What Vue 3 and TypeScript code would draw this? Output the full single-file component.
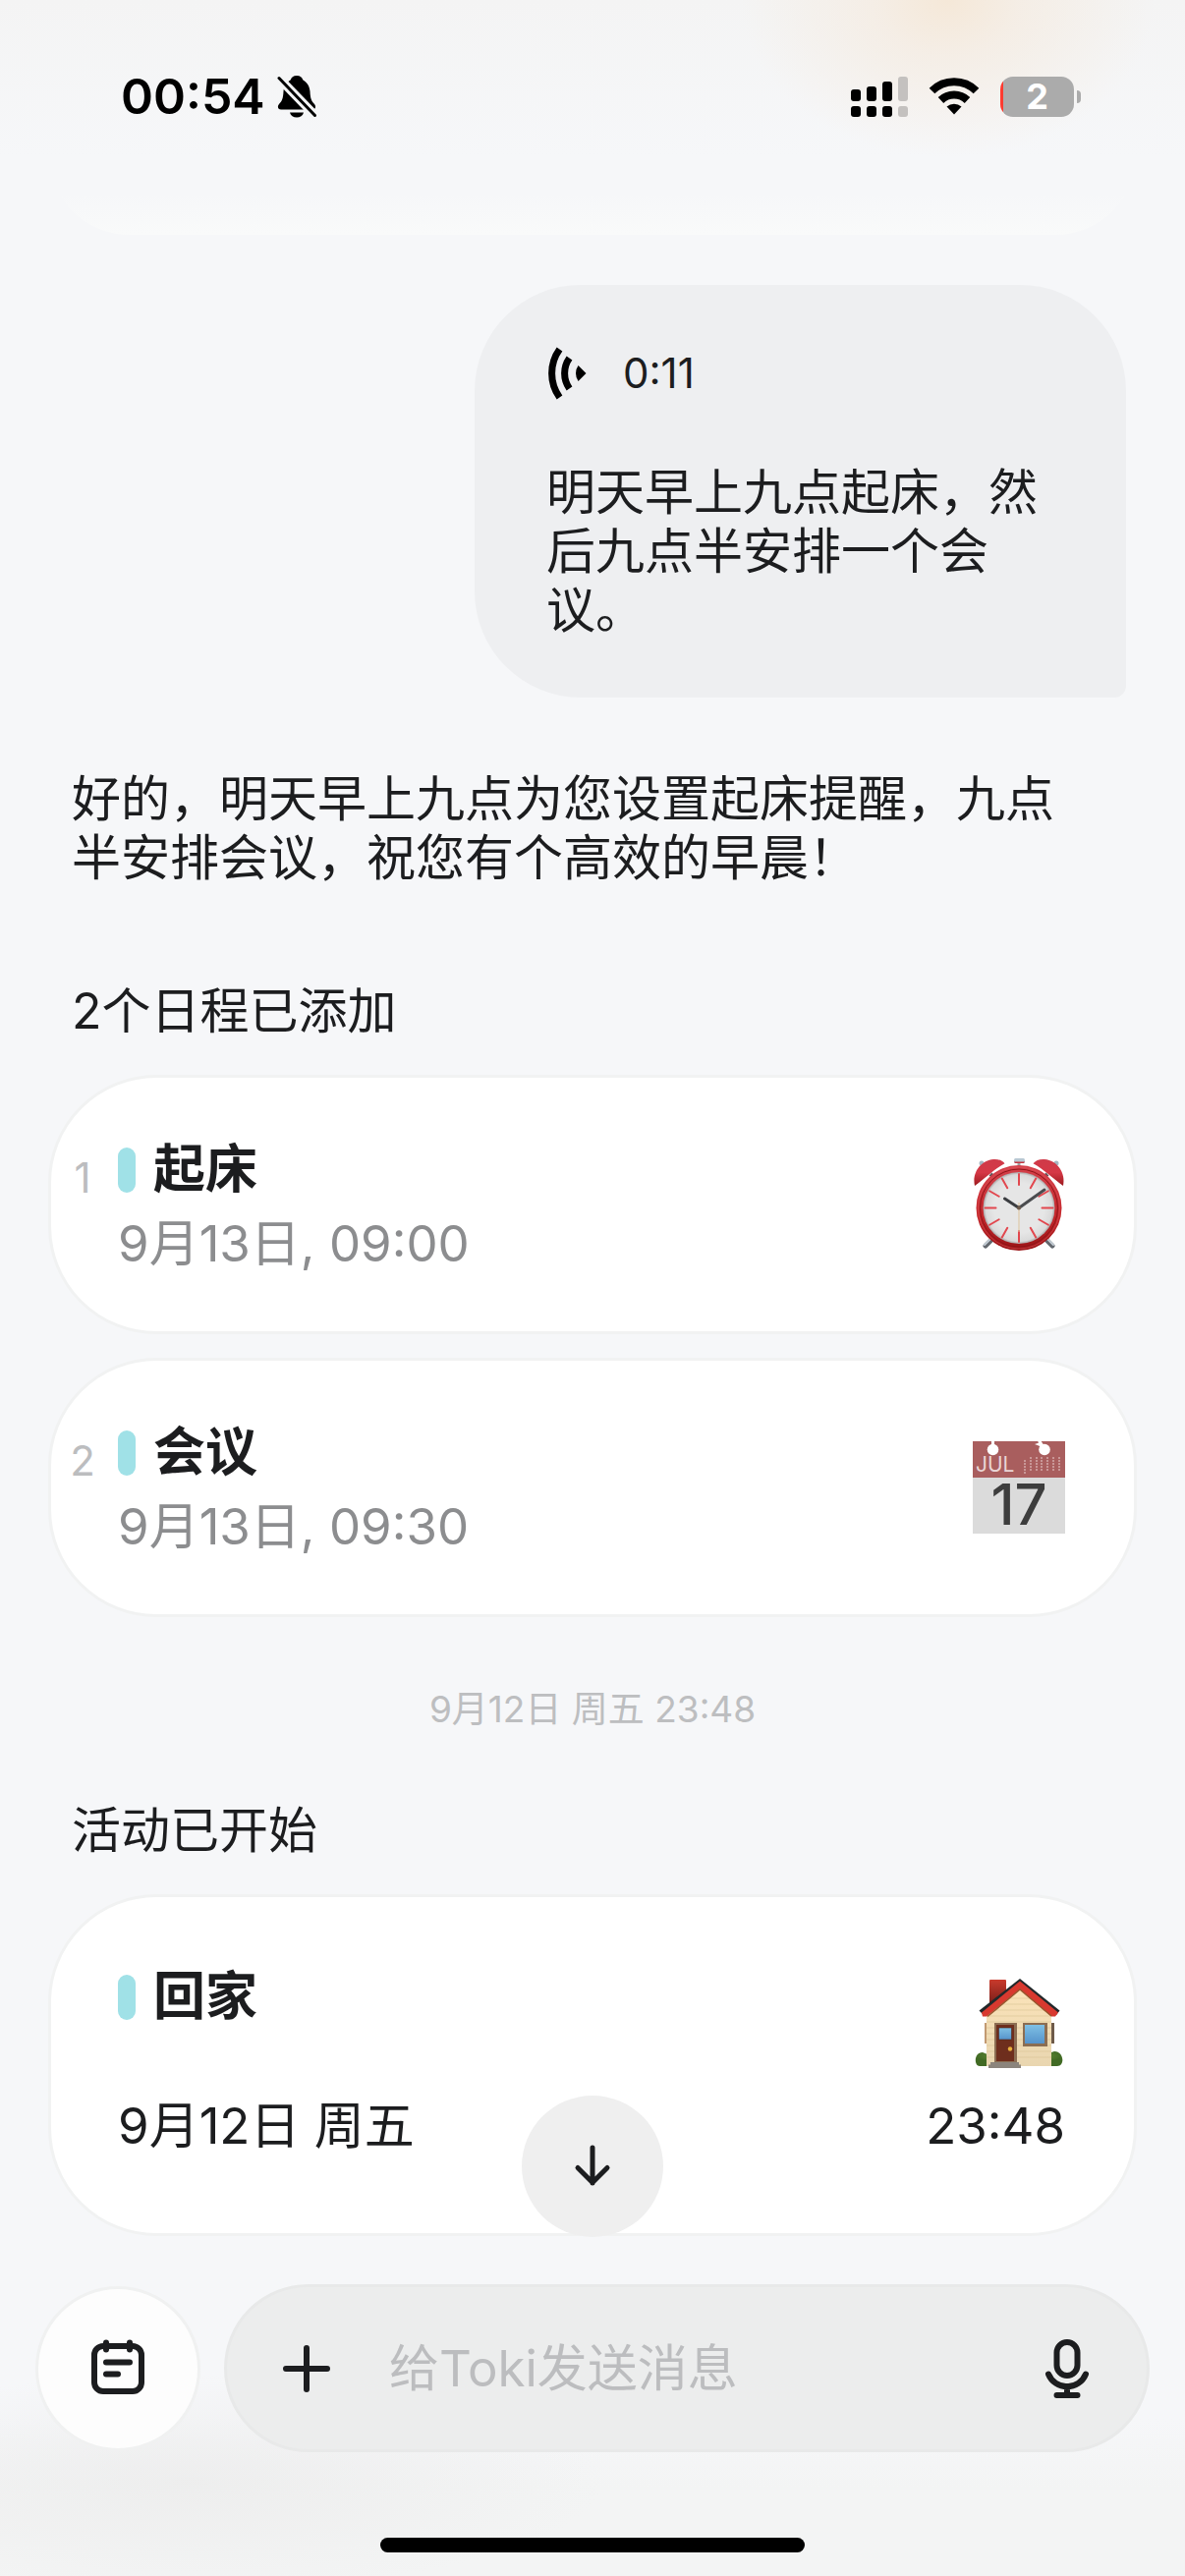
<script setup lang="ts">
import { ref } from 'vue'

interface Schedule {
  index: number
  title: string
  time: string
  icon: 'clock' | 'calendar'
}

const schedules: Schedule[] = [
  { index: 1, title: '起床', time: '9月13日, 09:00', icon: 'clock' },
  { index: 2, title: '会议', time: '9月13日, 09:30', icon: 'calendar' },
]

const signalBars = [
  { x: 0, top: 13, on: true },
  { x: 16, top: 10, on: true },
  { x: 32, top: 5, on: true },
  { x: 48, top: 0, on: false },
]

const clockTicks = Array.from({ length: 12 }, (_, i) => i * 30)

// Rows of day dots in the corner of the calendar picture
const dayColumns = [
  { x: 53, from: 20 },
  { x: 59, from: 17 },
  { x: 65, from: 17 },
  { x: 70, from: 17 },
  { x: 76, from: 17 },
  { x: 82, from: 17 },
  { x: 88, from: 17 },
]

const message = ref('')
</script>

<template>
  <div class="page">
    <header class="status">
      <div class="status-left">
        <time class="clock">00:54</time>
        <svg class="bell" viewBox="0 0 40 44" aria-label="静音">
          <path d="M20 1c-3.500 0-5.500 2-6.200 4.200C10 7.500 7 11 6.500 17c-.3 7-1.500 10-4.500 13-2.200 2.500-1 5.500 2 5.500h32c3 0 4-3 2-5.500-3-3-4.200-6-4.500-13C33 11 30 7.500 26.200 5.200 25.500 3 23.500 1 20 1Z" />
          <path d="M13 38.500h14c-.8 3.200-3.500 5-7 5s-6.200-1.800-7-5Z" />
          <path d="M-2 -.5 42 45" fill="none" stroke="#f4f5f6" stroke-width="9" />
          <path d="M2 3.500 38.500 41.500" fill="none" stroke="#000" stroke-width="3" stroke-linecap="round" />
        </svg>
      </div>
      <div class="status-right">
        <svg class="signal" viewBox="0 0 58 41" aria-label="信号">
          <g v-for="bar in signalBars" :key="bar.x" :fill="bar.on ? '#000' : '#c4c1bf'">
            <rect :x="bar.x" :y="bar.top" width="10" :height="25 - bar.top" rx="3" />
            <rect :x="bar.x" y="30" width="10" height="11" rx="3" />
          </g>
        </svg>
        <svg class="wifi" viewBox="0 0 52 38" aria-label="无线网络">
          <g fill="none" stroke="#000" stroke-width="8">
            <path d="M3.500 13.500a32 32 0 0 1 45 0" />
            <path d="M12.500 23a19.500 19.500 0 0 1 27 0" />
          </g>
          <path d="M18.500 29.500a11.500 11.500 0 0 1 15 0L26 37.500Z" />
        </svg>
        <div class="battery">
          <span class="battery-body">2</span>
          <span class="battery-tip"></span>
        </div>
      </div>
    </header>

    <main class="chat">
      <div class="previous-card"></div>

      <section class="bubble">
        <div class="voice">
          <svg class="voice-icon" viewBox="0 0 42 54" aria-hidden="true">
            <g fill="none" stroke="#000" stroke-width="7">
              <path d="M13.500 2.500a42 42 0 0 0 0 49" />
              <path d="M23.500 11.500a27 27 0 0 0 0 31" />
            </g>
            <path d="M32.500 19 40.500 27l-8 8a14 14 0 0 1 0-16Z" />
          </svg>
          <span class="voice-time">0:11</span>
        </div>
        <p class="text">明天早上九点起床，然后九点半安排一个会议。</p>
      </section>

      <p class="text reply">好的，明天早上九点为您设置起床提醒，九点半安排会议，祝您有个高效的早晨！</p>

      <h2 class="text heading">2个日程已添加</h2>
      <ul class="cards">
        <li v-for="item in schedules" :key="item.index" class="card schedule">
          <span class="index">{{ item.index }}</span>
          <div class="details">
            <h3 class="title"><i class="tag"></i>{{ item.title }}</h3>
            <p class="when">{{ item.time }}</p>
          </div>
          <svg v-if="item.icon === 'clock'" class="emoji" viewBox="0 0 96 96" aria-hidden="true">
            <defs>
              <linearGradient id="bellRed" x1="0" y1="0" x2="0" y2="1">
                <stop offset="0" stop-color="#cf3a49" />
                <stop offset="0.500" stop-color="#d53846" />
                <stop offset="1" stop-color="#9c1a1e" />
              </linearGradient>
              <linearGradient id="rimRed" x1="0" y1="0" x2="0" y2="1">
                <stop offset="0" stop-color="#d5414b" />
                <stop offset="0.600" stop-color="#c4272b" />
                <stop offset="1" stop-color="#9a1316" />
              </linearGradient>
              <radialGradient id="dial">
                <stop offset="0.700" stop-color="#e6e6e6" />
                <stop offset="0.930" stop-color="#dadada" />
                <stop offset="1" stop-color="#a9a4a4" />
              </radialGradient>
            </defs>
            <g stroke-width="5" stroke-linecap="round">
              <path d="M22 83 15 90M76 83l7 7" stroke="#63686e" />
              <path d="m21 82-7 7M77 82l7 7" stroke="#c3ccd4" stroke-width="2" />
            </g>
            <circle cx="11" cy="6" r="2.500" fill="#a5b7c4" />
            <circle cx="87" cy="6" r="2.500" fill="#a5b7c4" />
            <path d="M47.500 6h3v7h-3Z" fill="#999ea3" />
            <rect x="44" y="1" width="11" height="5" rx="1.500" fill="#b8c8d3" />
            <path d="M44 4.500h11l-1 1.500h-9Z" fill="#c43740" />
            <path d="M4 29C1 16 10 3 23 2c5-.4 9 1.200 11.500 4.200C24 12 16 20 4 29Z" fill="url(#bellRed)" />
            <path d="M94 29C97 16 88 3 75 2c-5-.4-9 1.200-11.500 4.200C74 12 82 20 94 29Z" fill="url(#bellRed)" />
            <path d="m20 17 5 5M78 17l-5 5" stroke="#5e5257" stroke-width="4" />
            <circle cx="49" cy="51.500" r="43.500" fill="url(#rimRed)" />
            <circle cx="49" cy="51.500" r="39.500" fill="none" stroke="#8f1518" stroke-width="1" />
            <circle cx="49" cy="51.500" r="41.500" fill="none" stroke="#e05a5f" stroke-width="1" opacity="0.500" />
            <circle cx="49" cy="51.500" r="36.500" fill="url(#dial)" />
            <path
              v-for="deg in clockTicks"
              :key="deg"
              d="M49 17v11"
              stroke="#e2474e"
              stroke-width="2"
              stroke-linecap="round"
              :transform="`rotate(${deg} 49 51.500)`"
            />
            <path d="M49 46v30" stroke="#dcc39d" stroke-width="1" />
            <path d="M49 51.500 34.500 42" stroke="#3b3d40" stroke-width="3" stroke-linecap="round" />
            <path d="M49 51.500 75 33" stroke="#4a4c4f" stroke-width="3" stroke-linecap="round" />
            <circle cx="49" cy="51.500" r="2" fill="#6d5a4a" />
          </svg>
          <svg v-else class="emoji" viewBox="0 0 96 96" aria-hidden="true">
            <rect x="2" y="1" width="94" height="37" fill="#a95e5e" />
            <rect x="2" y="38" width="94" height="57" fill="#dbdbdb" />
            <circle cx="22.500" cy="9.500" r="5.800" fill="#fff" />
            <path d="M21 0h3v6h-3ZM68 0h3l4 6-4 3Z" fill="#fff" />
            <circle cx="75" cy="9.500" r="5.800" fill="#fff" />
            <path d="m65 4 6-2 2 5Z" fill="#fff" />
            <text x="5" y="32" class="month">JUL</text>
            <path
              v-for="col in dayColumns"
              :key="col.x"
              :d="`M${col.x + 2} ${col.from}v14`"
              stroke="#c99797"
              stroke-width="2"
              stroke-dasharray="2 1"
            />
            <text x="49" y="86" text-anchor="middle" class="day">17</text>
          </svg>
        </li>
      </ul>

      <time class="stamp">9月12日 周五 23:48</time>

      <h2 class="text heading">活动已开始</h2>
      <article class="card event">
        <div class="event-top">
          <h3 class="title"><i class="tag"></i>回家</h3>
          <svg class="emoji" viewBox="0 0 96 96" aria-hidden="true">
            <defs>
              <linearGradient id="wall" x1="0" y1="0" x2="0" y2="1">
                <stop offset="0" stop-color="#fbe3b9" />
                <stop offset="1" stop-color="#e9d6b0" />
              </linearGradient>
              <linearGradient id="glass" x1="0" y1="0" x2="0" y2="1">
                <stop offset="0" stop-color="#7fc0e4" />
                <stop offset="1" stop-color="#5593cb" />
              </linearGradient>
              <linearGradient id="brick" x1="0" y1="0" x2="0" y2="1">
                <stop offset="0" stop-color="#c93a2c" />
                <stop offset="1" stop-color="#6e1b17" />
              </linearGradient>
              <radialGradient id="bush" cx="0.500" cy="0.300">
                <stop offset="0" stop-color="#84b04a" />
                <stop offset="1" stop-color="#416a24" />
              </radialGradient>
            </defs>
            <path d="M17 92H9c-6 0-6-14 3-14l5 2ZM80 92h8c8 0 7-15-3-15l-6 2Z" fill="url(#bush)" />
            <rect x="14" y="48" width="3" height="21" fill="#c29a72" />
            <rect x="82" y="48" width="3" height="21" fill="#6e5a49" />
            <rect x="19" y="4" width="17" height="28" rx="1" fill="url(#brick)" />
            <path d="M16 40 49.500 12 82 40v52H16Z" fill="url(#wall)" />
            <path
              d="M38 23h23M32 29h35M25 35h49M18 41h63M16 47h66M16 53h66M16 59h66M16 65h66M16 71h66M16 77h66M16 83h66"
              stroke="#d9c296"
              stroke-width="0.600"
            />
            <path d="M8.500 35.500 50 3 90.500 35.500 87 40 50 11 13 40Z" fill="#22282a" />
            <path d="M11 37.500 50 5.500 89 37.500 86 41.500h-4L50 14 16 41.500h-4Z" fill="#d8392f" />
            <path d="M17 41.500 50 14 82 41" fill="none" stroke="#99562f" stroke-width="1.500" />
            <rect x="24" y="48" width="23" height="41" fill="#8b6d52" />
            <rect x="26" y="50" width="18" height="37" fill="#6e2e1d" />
            <rect x="28.500" y="53" width="13" height="12" fill="url(#glass)" stroke="#4f281d" stroke-width="0.600" />
            <circle cx="40" cy="74.500" r="2.200" fill="#e9b03c" />
            <rect x="53" y="48" width="25" height="24" fill="#8b6d52" />
            <rect x="55" y="50" width="20" height="19" fill="url(#glass)" />
            <path d="M20 88h29v2.500h2V94H18v-3.500h2Z" fill="#8b847c" />
          </svg>
        </div>
        <div class="event-row">
          <span>9月12日 周五</span>
          <time>23:48</time>
        </div>
      </article>

      <button class="scroll-down" type="button" aria-label="滚动到底部">
        <svg viewBox="0 0 48 48" aria-hidden="true">
          <path d="M24 5v36M9 25.500l15 15 15-15" />
        </svg>
      </button>
    </main>

    <footer class="dock">
      <form class="composer" @submit.prevent>
        <button class="agenda" type="button" aria-label="日程">
          <svg viewBox="0 0 60 60" aria-hidden="true">
            <rect x="6" y="7" width="48" height="46" rx="9" />
            <path d="M18 3.500v7M42 3.500v7M18 23.500h24M18 35.500h12" />
          </svg>
        </button>
        <div class="field">
          <button class="plain" type="button" aria-label="添加">
            <svg viewBox="0 0 60 60" aria-hidden="true">
              <path d="M30 9v42M9 30h42" />
            </svg>
          </button>
          <input v-model="message" class="input" type="text" aria-label="消息" placeholder="给Toki发送消息" />
          <button class="plain" type="button" aria-label="语音输入">
            <svg viewBox="0 0 60 60" aria-hidden="true">
              <rect x="19.500" y="3" width="21" height="34" rx="10.500" />
              <path d="M11 35.500a20.500 20.500 0 0 0 38 0M30 48v8M19.500 57h21" />
            </svg>
          </button>
        </div>
      </form>
      <div class="home-indicator"></div>
    </footer>
  </div>
</template>

<style>
body {
  margin: 0;
  background: #f6f7f9;
}
</style>

<style scoped>
.page {
  display: flex;
  flex-direction: column;
  min-height: 100vh;
  box-sizing: border-box;
  color: #1c1d1f;
  font-family: Inter, 'Noto Sans CJK SC', sans-serif;
  background:
    radial-gradient(ellipse 210px 160px at 80% 0, rgba(245, 232, 216, 1), rgba(245, 236, 226, 0.8) 35%, rgba(245, 243, 241, 0) 100%) no-repeat,
    linear-gradient(180deg, #f4f4f4, rgba(246, 247, 249, 0) 160px) no-repeat,
    radial-gradient(ellipse 420px 110px at 16% calc(100% - 95px), rgba(236, 236, 236, 0.8), rgba(240, 241, 241, 0)) no-repeat,
    linear-gradient(0deg, #f3f4f4 90px, rgba(246, 247, 249, 0) 160px) no-repeat,
    #f6f7f9;
}

h2,
h3,
p,
ul {
  margin: 0;
  padding: 0;
  font-weight: 400;
  list-style: none;
}

button {
  display: flex;
  flex-shrink: 0;
  align-items: center;
  justify-content: center;
  padding: 0;
  border: 0;
  background: none;
  cursor: pointer;
}

.status {
  display: flex;
  align-items: center;
  justify-content: space-between;
  height: 156px;
  padding: 40px 106px 0 123px;
  box-sizing: border-box;
}

.status-left,
.status-right,
.battery {
  display: flex;
  align-items: center;
}

.status-left {
  gap: 12px;
}

.clock {
  font-size: 50px;
  line-height: 60px;
  font-weight: 600;
  color: #000;
}

.bell {
  width: 40px;
  height: 44px;
}

.signal {
  width: 58px;
  height: 41px;
}

.wifi {
  width: 52px;
  height: 38px;
  margin: 0 21px;
}

.battery {
  gap: 3px;
}

.battery-body {
  width: 75px;
  height: 41px;
  border-radius: 13px;
  background: linear-gradient(90deg, #ff3b30 3px, #ababab 3px);
  color: #fff;
  font-size: 36px;
  line-height: 41px;
  font-weight: 700;
  text-align: center;
}

.battery-tip {
  width: 4px;
  height: 13px;
  border-radius: 0 6px 6px 0;
  background: #ababab;
}

.chat {
  position: relative;
  display: flex;
  flex-direction: column;
  padding: 0 49px;
}

.previous-card {
  height: 83px;
  margin-bottom: 51px;
  box-sizing: border-box;
  border-radius: 0 0 108px 108px;
  background: linear-gradient(180deg, rgba(249, 250, 250, 0) 50%, #f9fafa);
}

.bubble {
  align-self: flex-end;
  width: 60%;
  max-width: 663px;
  margin-right: 11px;
  padding: 60px 72px 59px 73px;
  box-sizing: border-box;
  border-radius: 108px 108px 12px 108px;
  background: #eeeff1;
}

.voice {
  display: flex;
  align-items: center;
  gap: 36px;
  height: 60px;
  margin-bottom: 61px;
}

.voice-icon {
  width: 42px;
  height: 54px;
}

.voice-time {
  font-size: 42px;
  line-height: 60px;
}

.text {
  font-size: 50px;
  line-height: 60px;
}

.reply {
  margin: 73px 48px 96px 24px;
}

.heading {
  margin: 0 24px 35px;
}

.cards {
  display: flex;
  flex-direction: column;
  gap: 24px;
}

.card {
  box-sizing: border-box;
  border: 3px solid #f1f2f2;
  border-radius: 110px;
  background: #fff;
}

.schedule {
  display: flex;
  align-items: baseline;
  padding: 56px 70px 52px 0;
}

.index {
  width: 64px;
  margin-right: 4px;
  color: #bcbdbf;
  font-size: 42px;
  text-align: center;
}

.details {
  flex: 1;
}

.title {
  display: flex;
  align-items: center;
  gap: 18px;
  font-size: 53px;
  line-height: 75px;
  font-weight: 600;
}

.tag {
  width: 18px;
  height: 46px;
  border-radius: 9px;
  background: #a0e1e7;
}

.when {
  color: #8c8d8f;
  font-size: 51px;
  line-height: 75px;
}

.emoji {
  width: 96px;
  height: 96px;
  margin-bottom: 4px;
  align-self: center;
  overflow: visible;
}

.month {
  fill: #e9d5d5;
  font-family: Inter, sans-serif;
  font-size: 21px;
}

.day {
  fill: #3d3d3d;
  font-family: Inter, sans-serif;
  font-size: 58px;
  font-weight: 500;
}

.stamp {
  margin: 70px 0 69px;
  color: #bdbec0;
  font-size: 37px;
  line-height: 48px;
  text-align: center;
}

.event {
  padding: 64px 70px 72px 68px;
}

.event-top {
  display: flex;
  justify-content: space-between;
  align-items: flex-start;
  height: 116px;
  margin-bottom: 15px;
}

.event-top .emoji {
  align-self: flex-end;
}

.event-row {
  display: flex;
  justify-content: space-between;
  font-size: 51px;
  line-height: 75px;
}

.scroll-down {
  position: absolute;
  bottom: -1px;
  left: 50%;
  width: 144px;
  height: 144px;
  margin-left: -72px;
  border-radius: 50%;
  background: #efefef;
}

.scroll-down svg {
  width: 48px;
  height: 48px;
}

.scroll-down path,
.composer path,
.composer rect {
  fill: none;
  stroke: #1c1d1f;
  stroke-linecap: round;
  stroke-linejoin: round;
}

.scroll-down path {
  stroke-width: 5;
}

.composer path,
.composer rect {
  stroke-width: 6;
}

.composer svg {
  width: 60px;
  height: 60px;
}

.dock {
  display: flex;
  flex-direction: column;
  margin-top: auto;
  padding: 48px 36px 24px;
}

.composer {
  display: flex;
  align-items: center;
  gap: 24px;
}

.agenda {
  width: 168px;
  height: 168px;
  box-sizing: border-box;
  border: 3px solid #f0f1f1;
  border-radius: 50%;
  background: #fdfdfd;
}

.field {
  display: flex;
  flex: 1;
  align-items: center;
  gap: 54px;
  min-width: 0;
  height: 171px;
  padding: 0 51px;
  box-sizing: border-box;
  border: 3px solid #e8e9e9;
  border-radius: 86px;
  background: #eceded;
}

.input {
  flex: 1;
  min-width: 0;
  height: 75px;
  padding: 0;
  border: 0;
  outline: 0;
  background: none;
  color: #1c1d1f;
  font: inherit;
  font-size: 51px;
}

.input::placeholder {
  color: #bcbdbf;
  opacity: 1;
}

.home-indicator {
  align-self: center;
  width: 432px;
  height: 15px;
  margin-top: 87px;
  border-radius: 8px;
  background: #000;
}
</style>
